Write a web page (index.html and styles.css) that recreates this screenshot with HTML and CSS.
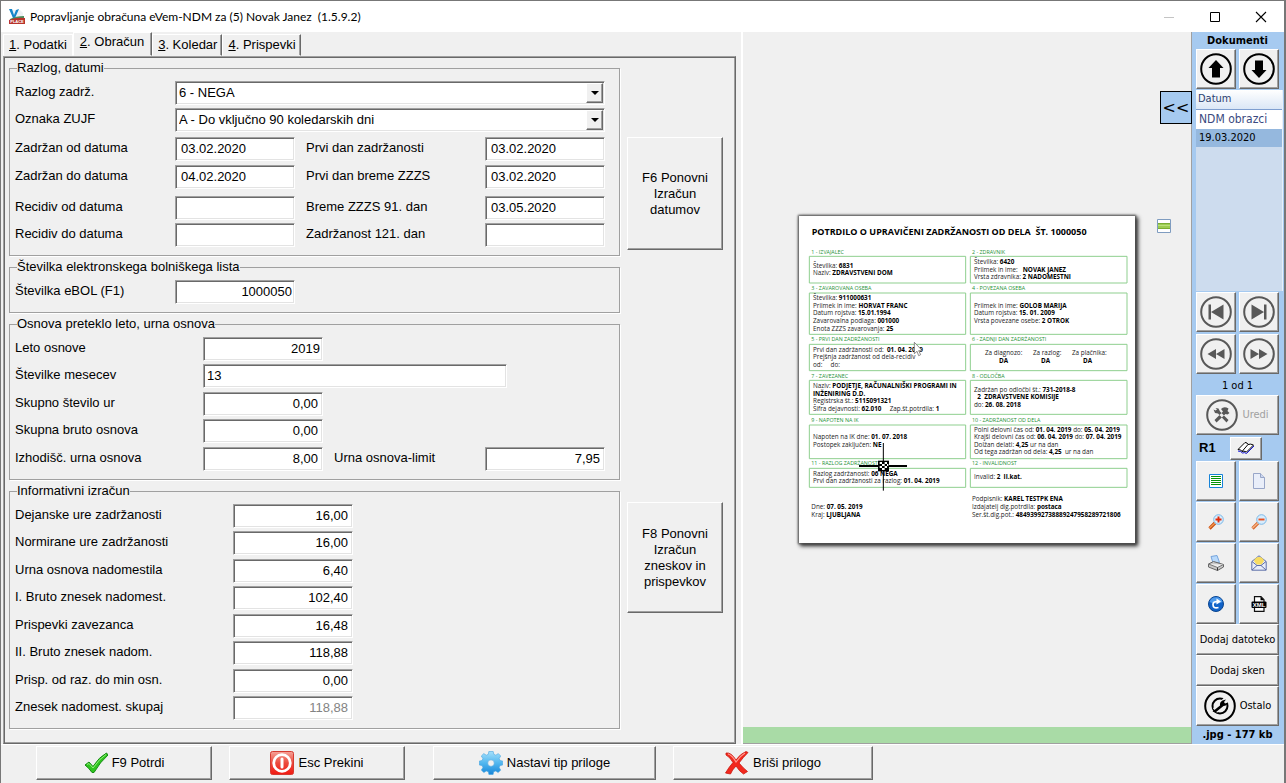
FILE: index.html
```html
<!DOCTYPE html>
<html lang="sl">
<head>
<meta charset="utf-8">
<title>Popravljanje obračuna eVem-NDM</title>
<link rel="stylesheet" href="styles.css">
</head>
<body>
<div class="window">
  <header class="titlebar">
    <svg class="logo" viewBox="0 0 16 16" aria-hidden="true">
      <path d="M3 1h8l3 3v9H3z" fill="#eef1f4"/>
      <path d="M0 0h3l2 6 2-5 3-1-4 9H4z" fill="#1686c9"/>
      <path d="M1 10q6-3 14-3v2q-8 0-14 3z" fill="#4b8f5f"/>
      <path d="M0 11q7-3 16-2v6H0z" fill="#b8332b"/>
      <text x="8" y="14" class="logo-text">PLACE</text>
    </svg>
    <h1 class="caption">Popravljanje obračuna eVem-NDM za (5) Novak Janez&nbsp; (1.5.9.2)</h1>
    <div class="window-buttons">
      <button class="win-btn" aria-label="Minimiraj" disabled><svg viewBox="0 0 12 12"><path d="M1 6.500h10" stroke="#c4c4c4"/></svg></button>
      <button class="win-btn" aria-label="Povečaj"><svg viewBox="0 0 12 12"><path d="M1.500 1.500h9v9h-9z" fill="none" stroke="#000"/></svg></button>
      <button class="win-btn" aria-label="Zapri"><svg viewBox="0 0 12 12"><path d="M1 1l10 10M11 1L1 11" stroke="#000" stroke-width="1.100"/></svg></button>
    </div>
  </header>

  <main class="workspace">
    <section class="editor">
      <div class="tabs" role="tablist">
        <button class="tab" role="tab"><u>1</u>. Podatki</button>
        <button class="tab tab-active" role="tab" aria-selected="true"><u>2</u>. Obračun</button>
        <button class="tab" role="tab"><u>3</u>. Koledar</button>
        <button class="tab" role="tab"><u>4</u>. Prispevki</button>
      </div>
      <form class="panel">
        <fieldset class="group">
          <legend>Razlog, datumi</legend>
          <div class="rows">
            <div class="row">
              <label for="razlog">Razlog zadrž.</label>
              <span class="combo"><select id="razlog"><option>6 - NEGA</option></select><span class="combo-arrow"></span></span>
            </div>
            <div class="row">
              <label for="zujf">Oznaka ZUJF</label>
              <span class="combo"><select id="zujf"><option>A - Do vključno 90 koledarskih dni</option></select><span class="combo-arrow"></span></span>
            </div>
          </div>
          <div class="rows rows-dates">
            <div class="row">
              <label for="zod">Zadržan od datuma</label><input id="zod" class="field date" value="03.02.2020">
              <label for="prvi" class="second">Prvi dan zadržanosti</label><input id="prvi" class="field date" value="03.02.2020">
            </div>
            <div class="row">
              <label for="zdo">Zadržan do datuma</label><input id="zdo" class="field date" value="04.02.2020">
              <label for="breme" class="second">Prvi dan breme ZZZS</label><input id="breme" class="field date" value="03.02.2020">
            </div>
          </div>
          <div class="rows rows-recidiv">
            <div class="row">
              <label for="rod">Recidiv od datuma</label><input id="rod" class="field date" value="">
              <label for="b91" class="second">Breme ZZZS 91. dan</label><input id="b91" class="field date" value="03.05.2020">
            </div>
            <div class="row">
              <label for="rdo">Recidiv do datuma</label><input id="rdo" class="field date" value="">
              <label for="z121" class="second">Zadržanost 121. dan</label><input id="z121" class="field date" value="">
            </div>
          </div>
        </fieldset>
        <button type="button" class="btn recalc recalc-dates">F6 Ponovni Izračun datumov</button>

        <fieldset class="group">
          <legend>Številka elektronskega bolniškega lista</legend>
          <div class="rows">
            <div class="row"><label for="ebol">Številka eBOL (F1)</label><input id="ebol" class="field whole" value="1000050"></div>
          </div>
        </fieldset>

        <fieldset class="group base">
          <legend>Osnova preteklo leto, urna osnova</legend>
          <div class="rows">
            <div class="row"><label for="leto">Leto osnove</label><input id="leto" class="field whole" value="2019"></div>
            <div class="row"><label for="mes">Številke mesecev</label><input id="mes" class="field months" value="13"></div>
            <div class="row"><label for="ure">Skupno število ur</label><input id="ure" class="field num" value="0,00"></div>
            <div class="row"><label for="bruto">Skupna bruto osnova</label><input id="bruto" class="field num" value="0,00"></div>
            <div class="row"><label for="izh">Izhodišč. urna osnova</label><input id="izh" class="field num" value="8,00">
              <label for="limit" class="second">Urna osnova-limit</label><input id="limit" class="field num" value="7,95"></div>
          </div>
        </fieldset>

        <fieldset class="group calc">
          <legend>Informativni izračun</legend>
          <div class="rows">
            <div class="row"><label for="c1">Dejanske ure zadržanosti</label><input id="c1" class="field num" value="16,00"></div>
            <div class="row"><label for="c2">Normirane ure zadržanosti</label><input id="c2" class="field num" value="16,00"></div>
            <div class="row"><label for="c3">Urna osnova nadomestila</label><input id="c3" class="field num" value="6,40"></div>
            <div class="row"><label for="c4">I. Bruto znesek nadomest.</label><input id="c4" class="field num" value="102,40"></div>
            <div class="row"><label for="c5">Prispevki zavezanca</label><input id="c5" class="field num" value="16,48"></div>
            <div class="row"><label for="c6">II. Bruto znesek nadom.</label><input id="c6" class="field num" value="118,88"></div>
            <div class="row"><label for="c7">Prisp. od raz. do min osn.</label><input id="c7" class="field num" value="0,00"></div>
            <div class="row"><label for="c8">Znesek nadomest. skupaj</label><input id="c8" class="field num" value="118,88" disabled></div>
          </div>
        </fieldset>
        <button type="button" class="btn recalc recalc-sums">F8 Ponovni Izračun zneskov in prispevkov</button>
      </form>
    </section>

    <section class="viewer">
      <button class="collapse">&lt;&lt;</button>
      <svg class="page-marker" viewBox="0 0 14 14" aria-hidden="true">
        <path d="M.5.5h13v13H.5z" fill="#fff" stroke="#7f9cc0"/>
        <path d="M1 4h12v6H1z" fill="#9ccc50"/><path d="M1 6.500h12" stroke="#b9e07a"/><path d="M1 4.500h12M1 9.500h12" stroke="#79ad33"/>
      </svg>
      <div class="canvas">
        <svg class="document" viewBox="0 0 1008 981" role="img" aria-label="Potrdilo o upravičeni zadržanosti od dela">
          <text class="doc-title" x="38" y="57">POTRDILO O UPRAVIČENI ZADRŽANOSTI OD DELA  ŠT. 1000050</text>
          <g class="doc-box">
            <path d="M31 121h469v80H31zM514 121h470v80H514zM31 231h469v124H31zM514 231h470v124H514zM31 385h469v79H31zM514 385h470v79H514zM31 493h469v102H31zM514 493h470v102H514zM31 627h469v101H31zM514 627h470v101H514zM31 757h469v57H31zM514 757h470v57H514z"/>
          </g>
          <g class="doc-label">
            <text x="37" y="113">1 - IZVAJALEC</text><text x="519" y="113">2 - ZDRAVNIK</text>
            <text x="37" y="222">3 - ZAVAROVANA OSEBA</text><text x="519" y="222">4 - POVEZANA OSEBA</text>
            <text x="37" y="376">5 - PRVI DAN ZADRŽANOSTI</text><text x="519" y="376">6 - ZADNJI DAN ZADRŽANOSTI</text>
            <text x="37" y="485">7 - ZAVEZANEC</text><text x="519" y="485">8 - ODLOČBA</text>
            <text x="37" y="617">9 - NAPOTEN NA IK</text><text x="519" y="617">10 - ZADRŽANOST OD DELA</text>
            <text x="37" y="748">11 - RAZLOG ZADRŽANOSTI</text><text x="519" y="748">12 - INVALIDNOST</text>
          </g>
          <g class="doc-text">
            <text x="42" y="155">Številka: <tspan>6831</tspan></text>
            <text x="42" y="178">Naziv: <tspan>ZDRAVSTVENI DOM</tspan></text>
            <text x="525" y="144">Številka: <tspan>6420</tspan></text>
            <text x="525" y="167">Priimek in ime:   <tspan>NOVAK JANEZ</tspan></text>
            <text x="525" y="190">Vrsta zdravnika: <tspan>2 NADOMESTNI</tspan></text>
            <text x="42" y="252">Številka: <tspan>911000631</tspan></text>
            <text x="42" y="275">Priimek in ime: <tspan>HORVAT FRANC</tspan></text>
            <text x="42" y="298">Datum rojstva: <tspan>15.01.1994</tspan></text>
            <text x="42" y="321">Zavarovalna podlaga: <tspan>001000</tspan></text>
            <text x="42" y="344">Enota ZZZS zavarovanja: <tspan>25</tspan></text>
            <text x="525" y="275">Priimek in ime: <tspan>GOLOB MARIJA</tspan></text>
            <text x="525" y="298">Datum rojstva: <tspan>15. 01. 2009</tspan></text>
            <text x="525" y="321">Vrsta povezane osebe: <tspan>2 OTROK</tspan></text>
            <text x="42" y="407">Prvi dan zadržanosti od:  <tspan>01. 04. 2019</tspan></text>
            <text x="42" y="430">Prejšnja zadržanost od dela-recidiv</text>
            <text x="42" y="453">od:     do:</text>
            <text x="558" y="418">Za diagnozo:</text><text x="702" y="418">Za razlog:</text><text x="819" y="418">Za plačnika:</text>
            <text x="600" y="441"><tspan>DA</tspan></text><text x="726" y="441"><tspan>DA</tspan></text><text x="852" y="441"><tspan>DA</tspan></text>
            <text x="42" y="515">Naziv: <tspan>PODJETJE, RAČUNALNIŠKI PROGRAMI IN</tspan></text>
            <text x="42" y="539"><tspan>INŽENIRING D.D.</tspan></text>
            <text x="42" y="562">Registrska št.: <tspan>5115091321</tspan></text>
            <text x="42" y="585">Šifra dejavnosti: <tspan>62.010</tspan>     Zap.št.potrdila: <tspan>1</tspan></text>
            <text x="525" y="527">Zadržan po odločbi št.: <tspan>731-2018-8</tspan></text>
            <text x="535" y="550"><tspan>2  ZDRAVSTVENE KOMISIJE</tspan></text>
            <text x="525" y="573">do: <tspan>26. 08. 2018</tspan></text>
            <text x="42" y="670">Napoten na IK dne: <tspan>01. 07. 2018</tspan></text>
            <text x="42" y="693">Postopek zaključen: <tspan>NE</tspan></text>
            <text x="525" y="647">Polni delovni čas od: <tspan>01. 04. 2019</tspan> do: <tspan>05. 04. 2019</tspan></text>
            <text x="525" y="670">Krajši delovni čas od: <tspan>06. 04. 2019</tspan> do: <tspan>07. 04. 2019</tspan></text>
            <text x="525" y="693">Dolžan delati: <tspan>4,25</tspan> ur na dan</text>
            <text x="525" y="715">Od tega zadržan od dela: <tspan>4,25</tspan>  ur na dan</text>
            <text x="42" y="779">Razlog zadržanosti: <tspan>06 NEGA</tspan></text>
            <text x="42" y="802">Prvi dan zadržanosti za razlog: <tspan>01. 04. 2019</tspan></text>
            <text x="525" y="790">Invalid: <tspan>2  II.kat.</tspan></text>
            <text x="37" y="879">Dne: <tspan>07. 05. 2019</tspan></text>
            <text x="37" y="902">Kraj: <tspan>LJUBLJANA</tspan></text>
            <text x="519" y="855">Podpisnik: <tspan>KAREL TESTPK ENA</tspan></text>
            <text x="519" y="879">Izdajatelj dig.potrdila: <tspan>postaca</tspan></text>
            <text x="519" y="902">Ser.št.dig.pot.: <tspan>48493992738889247958289721806</tspan></text>
          </g>
          <path d="M346 379v34l8-7 5 13 6-3-6-12h11z" fill="#fff" stroke="#555" stroke-width="2"/>
          <g stroke="#000">
            <path d="M253 681v54M253 765v59" stroke-width="3"/>
            <path d="M180 750h58M270 750h54" stroke-width="6"/>
          </g>
          <path d="M237 734h33v32h-33z"/>
          <path d="M242 738h7v6h-7zM257 738h7v6h-7zM249 744h8v6h-8zM264 744h4v6h-4zM242 750h7v6h-7zM257 750h7v6h-7zM249 756h8v6h-8z" fill="#fff"/>
        </svg>
      </div>
      <div class="progress"></div>
    </section>

    <aside class="sidebar">
      <h2 class="side-title">Dokumenti</h2>
      <div class="pair">
        <button class="btn tool" aria-label="Gor"><svg class="round" viewBox="0 0 32 32"><circle cx="16" cy="16" r="14.800"/><path d="M16 7l7.500 8H20v9.500h-8V15H8.500z"/></svg></button>
        <button class="btn tool" aria-label="Dol"><svg class="round" viewBox="0 0 32 32"><circle cx="16" cy="16" r="14.800"/><path d="M16 25l7.500-8H20V7.500h-8V17H8.500z"/></svg></button>
      </div>
      <div class="list">
        <table>
          <thead><tr><th>Datum</th></tr></thead>
          <tbody><tr><td class="category">NDM obrazci</td></tr><tr class="selected"><td>19.03.2020</td></tr></tbody>
        </table>
      </div>
      <div class="pair">
        <button class="btn tool" aria-label="Prvi"><svg class="round muted" viewBox="0 0 32 32"><circle cx="16" cy="16" r="14.800"/><path d="M8.500 8.500h2.500v15H8.500zM23.500 8.500v15L11 16z"/></svg></button>
        <button class="btn tool" aria-label="Zadnji"><svg class="round muted" viewBox="0 0 32 32"><circle cx="16" cy="16" r="14.800"/><path d="M23.500 8.500H21v15h2.500zM8.500 8.500v15L21 16z"/></svg></button>
        <button class="btn tool" aria-label="Prejšnji"><svg class="round muted" viewBox="0 0 32 32"><circle cx="16" cy="16" r="14.800"/><path d="M16 11v10l-8.500-5zM24.500 11v10L16 16z"/></svg></button>
        <button class="btn tool" aria-label="Naslednji"><svg class="round muted" viewBox="0 0 32 32"><circle cx="16" cy="16" r="14.800"/><path d="M16 11v10l8.500-5zM7.500 11v10l8.500-5z"/></svg></button>
      </div>
      <p class="counter">1 od 1</p>
      <button class="btn wide tall" disabled>
        <svg class="round muted" viewBox="0 0 32 32"><circle cx="16" cy="16" r="14.800"/><path d="M9.500 9l3 .5 1.500 3 8.500 8.500-2 2.500-8.500-9-3-.5-1.500-3.500 2 1 1.500-1zM22.500 9.500q-4.500-2.500-7.500.5l2 2.500L8.500 21l2 2.500 9-8.500 2 .5 2-1.500-2-2z"/></svg>
        Uredi</button>
      <div class="rotate">
        <strong>R1</strong>
        <button class="btn book" aria-label="Knjiga"><svg viewBox="0 0 18 14"><path d="M1 8.500L8 1.500q2.500 0 3 2 2.500-1 5.500.5L9.500 11q-3-1.500-4.500-.5-.5-2-4-2z" fill="#fff" stroke="#000"/><path d="M11 3.500L5 10.500" stroke="#000"/><path d="M1 10q3 0 4.500 2 2-1 4 .5l7.500-7.500" fill="none" stroke="#1414d8"/></svg></button>
      </div>
      <div class="pair pair-icons">
        <button class="btn tool" aria-label="Seznam"><svg class="icon" viewBox="0 0 16 16"><path d="M1.500 1.500h13v13h-13z" fill="#fff" stroke="#1683d8"/><path d="M3 3.500h10M3 5.500h10M3 7.500h10M3 9.500h10M3 11.500h10" stroke="#079307"/></svg></button>
        <button class="btn tool" aria-label="Nov"><svg class="icon" viewBox="0 0 16 16"><path d="M2.500.5h7l4 4v11h-11z" fill="#e9eef9" stroke="#98a6c8"/><path d="M9.500.5v4h4" fill="#cdd8ef" stroke="#98a6c8"/></svg></button>
        <button class="btn tool" aria-label="Povečaj sliko"><svg class="icon" viewBox="0 0 16 16"><path d="M7 9l-5.500 5.500" stroke="#c94e12" stroke-width="3.200"/><path d="M7 9l-5.500 5" stroke="#f39a52" stroke-width="1.200"/><circle cx="10.500" cy="5.500" r="4.800" fill="#d7ecfc" stroke="#7ab8e8"/><path d="M10.500 2.500v6M7.500 5.500h6" stroke="#e22a0a" stroke-width="1.900"/></svg></button>
        <button class="btn tool" aria-label="Pomanjšaj sliko"><svg class="icon" viewBox="0 0 16 16"><path d="M7 9l-5.500 5.500" stroke="#d86a32" stroke-width="3.200"/><path d="M7 9l-5.500 5" stroke="#f8b888" stroke-width="1.200"/><circle cx="10.500" cy="5.500" r="4.800" fill="#d7ecfc" stroke="#7ab8e8"/><path d="M7.500 5.500h6" stroke="#e9501f" stroke-width="1.900"/></svg></button>
        <button class="btn tool" aria-label="Natisni"><svg class="icon" viewBox="0 0 16 16"><path d="M3 1.500l6-1 2.500 7-6 2z" fill="#b8d9fb" stroke="#74a3dc"/><path d="M.5 9l5-2.500 10 3v2.500l-6 3.500-9-3.500z" fill="#c9c9c9" stroke="#666"/><path d="M.5 9l9 3.500 6-3" fill="#eee" stroke="#777"/><path d="M9.500 12.500v3" stroke="#333"/></svg></button>
        <button class="btn tool" aria-label="Pošlji"><svg class="icon" viewBox="0 0 16 16"><path d="M.8 6.500L8 .8l7.200 5.700v8.700H.8z" fill="#e8edf9" stroke="#5d6fa8"/><path d="M3 6q1-4 5-4t5 4l-2.500 3.500h-5z" fill="#f7dc62"/><path d="M1 6.500l5 4h4l5-4M1 15l5-4.500M15 15l-5-4.500" fill="none" stroke="#5d6fa8"/></svg></button>
        <button class="btn tool" aria-label="Zavrti"><svg class="icon" viewBox="0 0 16 16"><circle cx="8" cy="8" r="7.500" fill="#1263c8" stroke="#0b458f"/><path d="M1.500 6Q3 1.500 8 1.300T14.500 6Q8 9 1.500 6z" fill="#4f9bec"/><path d="M10.500 11.500Q5 13 5 8.500q0-3 4.500-3" fill="none" stroke="#fff" stroke-width="1.700"/><path d="M8.500 2.500l4.500 3-4.500 3z" fill="#fff"/></svg></button>
        <button class="btn tool" aria-label="XML"><svg class="icon" viewBox="0 0 16 16"><path d="M3.500 6V.7h6.500l3 3V6M3.500 12v3.300h9.500V12" fill="#fff" stroke="#111" stroke-width="1.200"/><path d="M9.500.5v3.700h3.700z"/><rect x=".5" y="5.500" width="15" height="6.500" rx="1"/><text class="xml-text" x="8" y="11">XML</text></svg></button>
      </div>
      <button class="btn wide short">Dodaj datoteko</button>
      <button class="btn wide short">Dodaj sken</button>
      <button class="btn wide tall">
        <svg class="round" viewBox="0 0 32 32"><circle cx="16" cy="16" r="14.800"/><circle cx="16" cy="16" r="7.500"/><path class="gap" d="M11 20.500L22.500 9.500"/><path d="M8.500 21.500l7.500-6q-.5-3.500 2.500-5l3.500-1-2 2.500 1 1.500 3-1q-1.500 3.500-4.500 3.500l-8 6.500z"/></svg>
        Ostalo</button>
      <p class="side-status">.jpg - 177 kb</p>
    </aside>
  </main>

  <footer class="actions">
    <div class="action-group">
      <button class="btn action confirm"><svg viewBox="0 0 24 24"><path d="M1 14l4-3 4 4.500Q15 6 22.500 2L24 4Q16 11 10 21.500H8Q5 17 1 14z" fill="#2fc51e" stroke="#148a12"/><path d="M3 13.500l2-1 4 4.500Q15 8 22 3.500" fill="none" stroke="#92f07a"/></svg>F9 Potrdi</button>
      <button class="btn action cancel"><svg viewBox="0 0 24 24"><defs><linearGradient id="red" x2="0" y2="1"><stop stop-color="#f5a49a"/><stop offset=".5" stop-color="#ec4a3c"/><stop offset="1" stop-color="#f11a12"/></linearGradient></defs><rect x=".5" y=".5" width="23" height="23" rx="2" fill="url(#red)" stroke="#d63a30"/><circle cx="12" cy="12" r="8.300" fill="none" stroke="#fff" stroke-width="2.800"/><path d="M12 8v8" stroke="#fff" stroke-width="3" stroke-linecap="round"/></svg>Esc Prekini</button>
    </div>
    <div class="action-group">
      <button class="btn action attach"><svg viewBox="0 0 24 24"><defs><linearGradient id="blue" x2="0" y2="1"><stop stop-color="#a5e0fb"/><stop offset=".5" stop-color="#52b7ef"/><stop offset="1" stop-color="#1685d8"/></linearGradient></defs><path fill="url(#blue)" stroke="#4aa6e0" stroke-width=".6" fill-rule="evenodd" d="M9.800.5h4.400l.6 2.800 2 .9 2.500-1.600 2.400 2.400-1.500 2.600.9 2 2.600.5v3.900l-2.700.6-.8 2 1.500 2.500-2.500 2.500-2.500-1.600-2 .8-.6 2.700H9.900l-.6-2.700-2-.8-2.500 1.600-2.500-2.500 1.600-2.500-.9-2-2.700-.6v-3.900L3 9.600l.9-2-1.600-2.600 2.500-2.400 2.500 1.600 2-.9zM12 8.800a3.300 3.300 0 100 6.600 3.300 3.300 0 000-6.600z"/></svg>Nastavi tip priloge</button>
      <button class="btn action remove"><svg viewBox="0 0 24 24"><path d="M1 2q5-1 10 7 4-6 10-8.500l2 1q-5 5-9 10.500 4 5 8.500 8.500l-4 2.500q-4-2.500-7.500-8-4 4-5.500 8l-5-1Q4 16 8 11.500 5 6 1 4z" fill="#f2281d" stroke="#c9160e" stroke-width=".8"/><path d="M3 3q4 1 8 8 4-6 9-9" fill="none" stroke="#ff9a90" stroke-width="1.200"/></svg>Briši prilogo</button>
    </div>
  </footer>
</div>
</body>
</html>
```
FILE: styles.css
```css
* { box-sizing: border-box; }
:root {
  --face: #f0f0f0;
  --blue: #a6caf0;
  --shade: #a0a0a0;
  --dark: #696969;
}
body {
  margin: 0;
  font: 13px/16px "Liberation Sans", Arial, sans-serif;
  color: #000;
  background: var(--face);
}
button, input, select { font: inherit; color: inherit; margin: 0; }
svg { display: block; flex: none; }

.window {
  display: flex;
  flex-direction: column;
  min-height: 100vh;
  border: 1px solid #777;
  border-width: 1px 2px 2px 1px;
}

/* Title bar */
.titlebar {
  display: flex;
  align-items: center;
  height: 31px;
  padding-left: 8px;
  background: #fff;
}
.logo { width: 16px; height: 16px; }
.logo-text { font: bold 4px "Liberation Sans", sans-serif; fill: #fff; text-anchor: middle; }
.caption {
  flex: 1;
  margin: 0 0 0 5px;
  font: 12px/16px Lato, "Noto Sans", sans-serif;
}
.window-buttons { display: flex; }
.win-btn {
  display: grid;
  place-items: center;
  width: 46px;
  height: 30px;
  padding: 0;
  border: 0;
  background: none;
}
.win-btn svg { width: 12px; height: 12px; }

/* Raised button */
.btn {
  padding: 0;
  border: 1px solid;
  border-color: #fff var(--dark) var(--dark) #fff;
  background: var(--face);
  box-shadow: inset -1px -1px var(--shade);
}

.workspace { display: flex; flex: 1; }

/* Form side */
.editor {
  display: flex;
  flex-direction: column;
  flex: none;
  padding: 0 5px 0 2px;
}
.tabs { display: flex; align-items: flex-end; height: 24px; }
.tab {
  height: 22px;
  padding: 0 4px 0 5px;
  border: 1px solid;
  border-color: #fff var(--dark) transparent #fff;
  background: var(--face);
  box-shadow: inset -1px 0 var(--shade);
  white-space: nowrap;
}
.tab:first-child { padding-right: 5px; border-right-color: #fff; box-shadow: none; }
.tab-active { height: 24px; padding: 0 7px 4px 6px; }
.panel {
  display: grid;
  grid-template-columns: 611px 96px;
  align-content: start;
  gap: 3px 7px;
  flex: 1;
  padding: 3px 12px 14px 5px;
  border: 1px solid;
  border-color: var(--shade) var(--dark) var(--dark) var(--shade);
  box-shadow: inset 1px 1px var(--dark), inset -1px -1px var(--shade);
}
.group {
  grid-column: 1;
  min-width: 0;
  margin: 0;
  padding: 5px 14px 8px 5px;
  border: 1px solid var(--shade);
  box-shadow: 1px 1px #fff;
}
.group legend {
  height: 16px;
  margin-left: 2px;
  padding: 0;
}
.rows { display: flex; flex-direction: column; gap: 3px; }
.rows-dates { margin-top: 5px; gap: 4px; }
.rows-recidiv { margin-top: 7px; }
.row {
  display: grid;
  grid-template-columns: 160px 120px 190px 120px;
  height: 24px;
}
.rows > .row:nth-child(even):not(:last-child) { height: 25px; }
.base .row { grid-template-columns: 188px 120px 162px 120px; }
.calc .row { grid-template-columns: 218px 120px; }
.row label { padding-top: 3px; white-space: nowrap; }
.row .second { padding-left: 11px; }
.field, .combo {
  height: 24px;
  border: 1px solid;
  border-color: var(--shade) #fff #fff var(--shade);
  background: #fff;
  box-shadow: inset 1px 1px var(--dark), inset -1px -1px #e3e3e3;
}
.field { width: 120px; padding: 0 3px 2px; }
.field:disabled { color: #838383; }
.date { padding: 0 5px 2px; }
.num { padding-right: 4px; text-align: right; }
.whole { padding-right: 2px; text-align: right; }
.months { grid-column: 2 / 5; width: 304px; }
.combo { display: flex; grid-column: 2 / 5; width: 430px; padding: 1px; }
.combo select {
  flex: 1;
  padding: 0 2px;
  border: 0;
  background: none;
  appearance: none;
}
.combo-arrow {
  display: grid;
  place-items: center;
  width: 17px;
  border: 1px solid;
  border-color: #fff var(--dark) var(--dark) #fff;
  background: var(--face);
  box-shadow: inset -1px -1px var(--shade);
  pointer-events: none;
}
.combo-arrow::before {
  content: "";
  border: 4px solid transparent;
  border-top-color: #000;
  border-bottom: 0;
}
.recalc { grid-column: 2; padding: 0 12px; }
.recalc-dates { grid-row: 1; align-self: end; height: 113px; margin-bottom: 6px; }
.recalc-sums { grid-row: 4; height: 111px; margin-top: 19px; }

/* Attachment viewer */
.viewer {
  position: relative;
  display: flex;
  flex-direction: column;
  flex: 1;
  border-left: 2px solid #fff;
}
.canvas { display: grid; place-items: center; flex: 1; }
.document {
  width: 336px;
  background: #fff;
  box-shadow: 0 0 2px 1px #555, 2px 2px 4px 1px #222;
  font: 19px "Open Sans", "Noto Sans", sans-serif;
}
.document text { white-space: pre; }
.doc-title { font-size: 27px; font-weight: 700; }
.doc-label { font-size: 16px; fill: #249034; }
.doc-box { fill: none; stroke: #8fcf8f; stroke-width: 3px; }
.doc-text { fill: #222; }
.doc-text tspan { font-weight: 700; fill: #000; }
.progress { height: 17px; background: #a9dba6; border-bottom: 1px solid var(--shade); }
.collapse {
  position: absolute;
  top: 59px;
  right: -1px;
  width: 32px;
  height: 33px;
  padding: 0;
  border: 1px solid #000;
  background: var(--blue);
  font: 16px/20px "DejaVu Sans", sans-serif;
}
.page-marker { position: absolute; top: 187px; right: 20px; width: 14px; height: 14px; }

/* Document sidebar */
.sidebar {
  display: flex;
  flex-direction: column;
  flex: none;
  width: 93px;
  padding: 1px 5px 0 4px;
  border-left: 1px solid var(--shade);
  background: var(--blue);
  font: 11px/16px "DejaVu Sans Condensed", "DejaVu Sans", sans-serif;
}
.side-title { margin: 0; font-size: 11px; line-height: 16px; text-align: center; }
.pair { display: grid; grid-template-columns: 40px 40px; gap: 2px 3px; }
.pair .btn { height: 40px; }
.pair-icons { gap: 1px 3px; }
.tool { display: grid; place-items: center; }
.round { width: 32px; height: 32px; }
.round circle { fill: none; stroke: #000; stroke-width: 2px; }
.round .gap { stroke: var(--face); stroke-width: 6px; }
.round.muted { fill: #585858; }
.round.muted circle { stroke: #585858; }
.icon { width: 16px; height: 16px; }
.xml-text { font: bold 6px "Liberation Sans", sans-serif; fill: #fff; text-anchor: middle; }
.list {
  flex: 1;
  margin: 1px -4px 1px 0;
  border-right: 1px solid #e8f0fa;
  background: #cddcee;
}
.list table { width: 100%; border-collapse: collapse; }
.list th {
  height: 19px;
  padding: 0 2px;
  border-bottom: 1px solid #7f9fd0;
  background: linear-gradient(#fff, #dbe7f6);
  color: #2b3f70;
  font-weight: 400;
  text-align: left;
}
.list td { height: 18px; padding: 0 3px; white-space: nowrap; }
.list .category { height: 20px; background: #fff; color: #3a4a80; font-size: 12px; }
.selected { background: #95b8de; }
.counter { margin: 4px 0 1px; text-align: center; }
.wide { display: flex; align-items: center; justify-content: center; gap: 4px; white-space: nowrap; }
.tall { height: 40px; }
.short { height: 31px; }
.wide:disabled { color: #a0a0a0; }
.rotate {
  display: flex;
  align-items: center;
  gap: 14px;
  height: 26px;
  padding-left: 3px;
  font: bold 13px/16px "Liberation Sans", sans-serif;
}
.book { display: grid; place-items: center; width: 32px; height: 23px; }
.book svg { width: 18px; height: 14px; }
.side-status { margin: 1px 0; font-weight: 700; line-height: 16px; text-align: center; }

/* Action bar */
.actions {
  display: flex;
  gap: 28px;
  padding: 1px 35px 4px;
  border-top: 1px solid #fff;
}
.action-group { display: flex; gap: 17px; }
.action {
  display: flex;
  align-items: center;
  justify-content: center;
  gap: 4px;
  height: 34px;
}
.action svg { width: 24px; height: 24px; }
.confirm, .cancel { width: 176px; }
.attach { width: 223px; }
.remove { width: 200px; }
```
